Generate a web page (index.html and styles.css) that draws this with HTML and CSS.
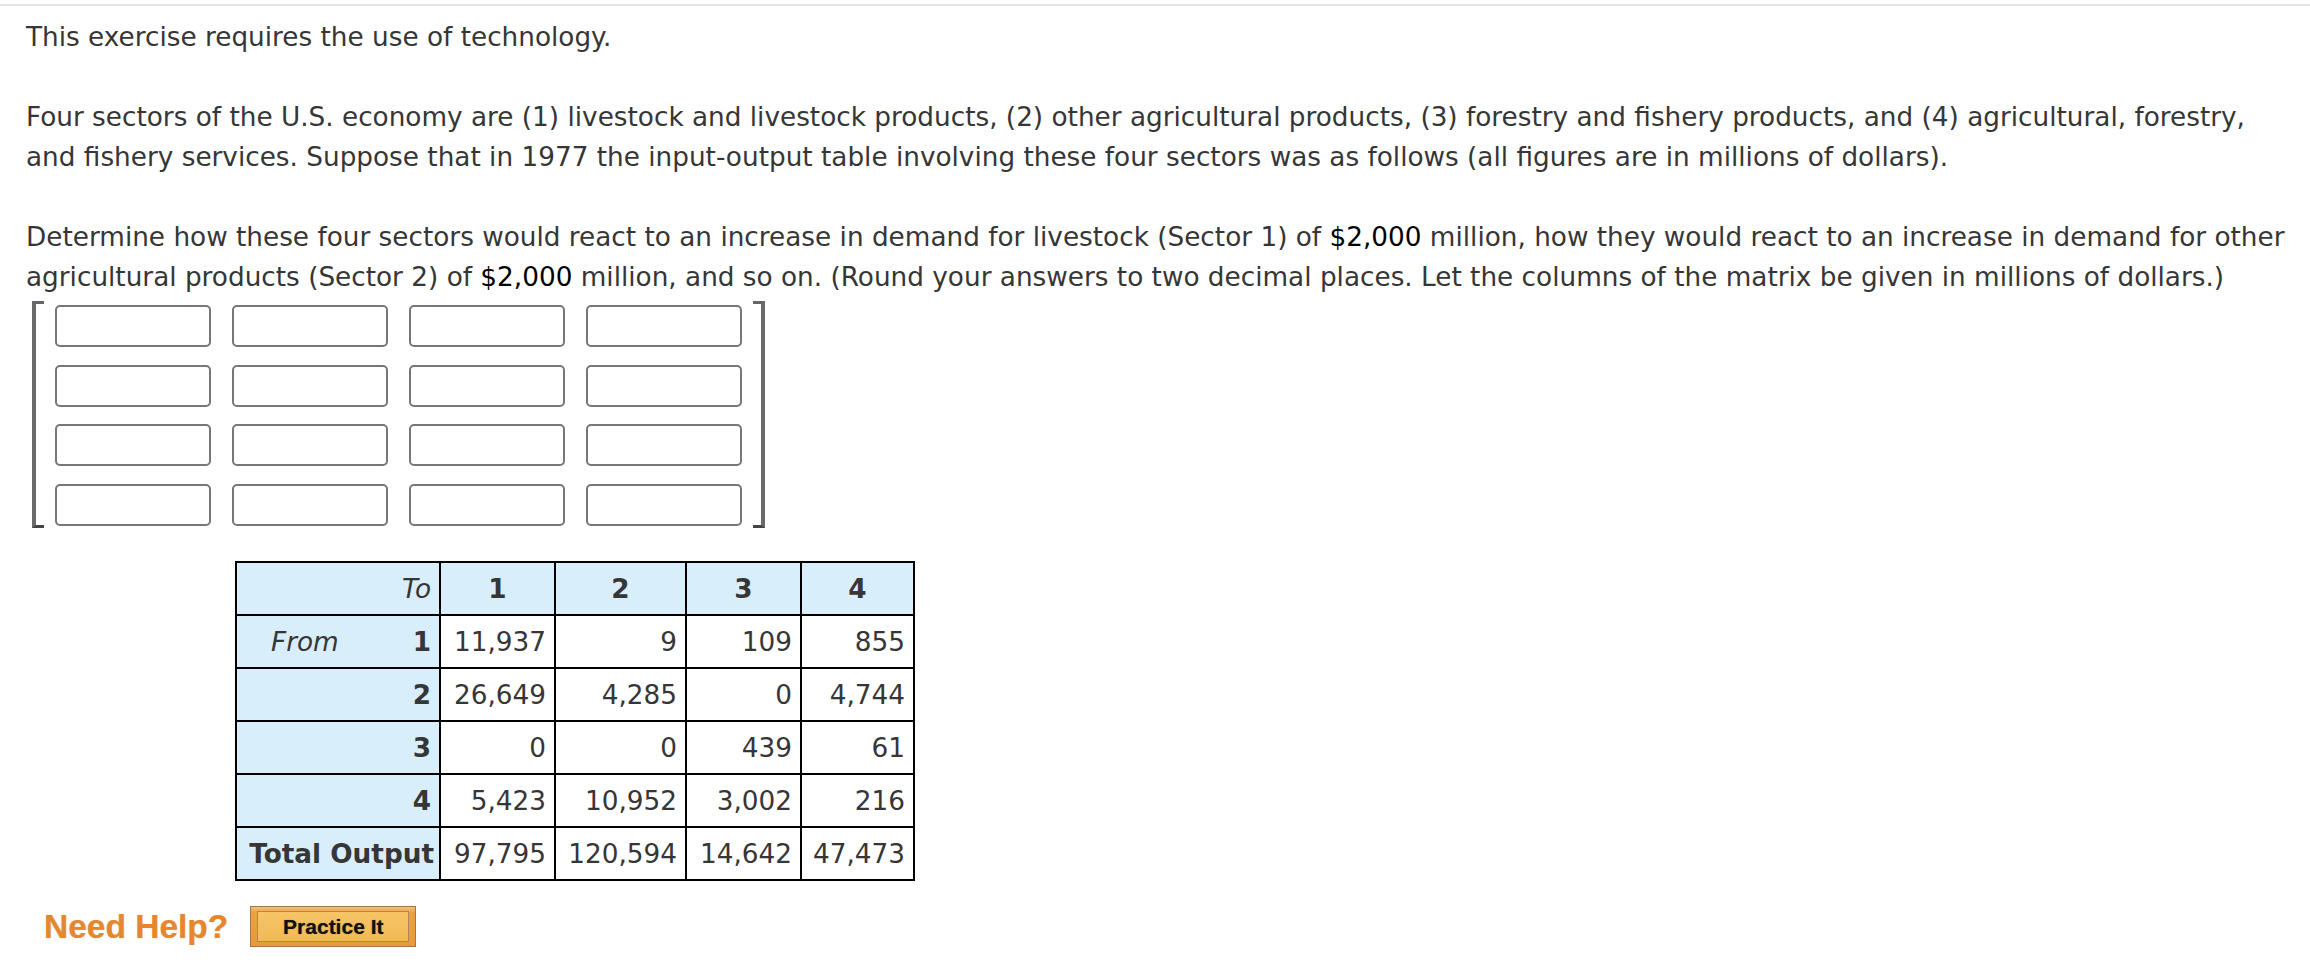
FILE: index.html
```html
<!DOCTYPE html>
<html>
<head>
<meta charset="utf-8">
<link rel="stylesheet" href="styles.css">
</head>
<body>
<div class="page">
  <div class="content">
    <p class="para">This exercise requires the use of technology.</p>
    <p class="para">Four sectors of the U.S. economy are (1) livestock and livestock products, (2) other agricultural products, (3) forestry and fishery products, and (4) agricultural, forestry, and fishery services. Suppose that in 1977 the input-output table involving these four sectors was as follows (all figures are in millions of dollars).</p>
    <p class="para last">Determine how these four sectors would react to an increase in demand for livestock (Sector 1) of <span class="money">$2,000</span> million, how they would react to an increase in demand for other agricultural products (Sector 2) of <span class="money">$2,000</span> million, and so on. (Round your answers to two decimal places. Let the columns of the matrix be given in millions of dollars.)</p>

    <div class="matrix">
      <div class="bracket left"></div>
      <div class="cells">
        <input class="box" type="text"><input class="box" type="text"><input class="box" type="text"><input class="box" type="text">
        <input class="box" type="text"><input class="box" type="text"><input class="box" type="text"><input class="box" type="text">
        <input class="box" type="text"><input class="box" type="text"><input class="box" type="text"><input class="box" type="text">
        <input class="box" type="text"><input class="box" type="text"><input class="box" type="text"><input class="box" type="text">
      </div>
      <div class="bracket right"></div>
    </div>

    <table class="io">
      <colgroup>
        <col class="c0"><col class="c1"><col class="c2"><col class="c3"><col class="c4">
      </colgroup>
      <tr class="head">
        <td class="lab to"><i>To</i></td>
        <td class="hnum">1</td><td class="hnum">2</td><td class="hnum">3</td><td class="hnum">4</td>
      </tr>
      <tr>
        <td class="lab"><span class="rowlab"><i class="from">From</i><b>1</b></span></td>
        <td class="num">11,937</td><td class="num">9</td><td class="num">109</td><td class="num">855</td>
      </tr>
      <tr>
        <td class="lab"><span class="rowlab"><i class="from"></i><b>2</b></span></td>
        <td class="num">26,649</td><td class="num">4,285</td><td class="num">0</td><td class="num">4,744</td>
      </tr>
      <tr>
        <td class="lab"><span class="rowlab"><i class="from"></i><b>3</b></span></td>
        <td class="num">0</td><td class="num">0</td><td class="num">439</td><td class="num">61</td>
      </tr>
      <tr>
        <td class="lab"><span class="rowlab"><i class="from"></i><b>4</b></span></td>
        <td class="num">5,423</td><td class="num">10,952</td><td class="num">3,002</td><td class="num">216</td>
      </tr>
      <tr>
        <td class="lab total"><b>Total Output</b></td>
        <td class="num">97,795</td><td class="num">120,594</td><td class="num">14,642</td><td class="num">47,473</td>
      </tr>
    </table>

    <div class="help">
      <span class="need">Need Help?</span>
      <button class="practice" type="button"><span class="practice-inner">Practice It</span></button>
    </div>
  </div>
</div>
</body>
</html>
```

FILE: styles.css
```css
html, body {
  margin: 0;
  padding: 0;
  background: #ffffff;
}

.page {
  margin-top: 4px;
  border-top: 2px solid #e3e3e3;
}

.content {
  padding: 11px 20px 0 26px;
  font-family: "DejaVu Sans", Verdana, sans-serif;
  font-size: 26.3px;
  line-height: 40px;
  color: #363636;
}

.para {
  margin: 0 0 40px 0;
}

.para.last {
  margin-bottom: 4px;
}

.money {
  color: #000000;
}

/* matrix */
.matrix {
  display: flex;
  align-items: stretch;
  margin-left: 6px;
  width: max-content;
}

.bracket {
  width: 8px;
  height: 221px;
  border-top: 3px solid #666;
  border-bottom: 3px solid #444;
}

.bracket.left {
  border-left: 4px solid #6a6a6a;
  margin-right: 11px;
}

.bracket.right {
  border-right: 4px solid #6a6a6a;
  margin-left: 11px;
}

.cells {
  display: grid;
  grid-template-columns: repeat(4, 156px);
  grid-auto-rows: 42px;
  column-gap: 21px;
  row-gap: 17.5px;
  padding-top: 4px;
}

.box {
  box-sizing: border-box;
  width: 156px;
  height: 42px;
  margin: 0;
  border: 2px solid #777777;
  border-radius: 5px;
  background: #ffffff;
  font: inherit;
}

/* table */
.io {
  margin-top: 33px;
  margin-left: 209px;
  border-collapse: collapse;
  table-layout: fixed;
  width: 678px;
}

.c0 { width: 204px; }
.c1 { width: 115px; }
.c2 { width: 131px; }
.c3 { width: 115px; }
.c4 { width: 113px; }

.io td {
  border: 2px solid #000000;
  height: 51px;
  padding: 0 8px 0 8px;
  white-space: nowrap;
  color: #363636;
}

.io .head td,
.io td.lab {
  background: #d9eefb;
}

.io td.to {
  text-align: right;
}

.io td.hnum {
  text-align: center;
  font-weight: bold;
}

.io td.num {
  text-align: right;
}

.rowlab {
  display: flex;
  justify-content: space-between;
  align-items: baseline;
  padding-left: 26px;
}

.io td.total {
  padding: 0 5px 0 5px;
  text-align: right;
}

/* help */
.help {
  display: flex;
  align-items: center;
  margin-top: 25px;
  margin-left: 18px;
  gap: 22px;
}

.need {
  font-family: "Liberation Sans", Arial, sans-serif;
  font-weight: bold;
  font-size: 33.5px;
  line-height: 40px;
  color: #e4882f;
  text-shadow: 0 0 1px rgba(228, 136, 47, 0.6);
}

.practice {
  box-sizing: border-box;
  width: 166px;
  height: 41px;
  padding: 4px 6px;
  margin: 0;
  border: 1px solid #a2763e;
  background: linear-gradient(#f2c27a 0, #eba048 14%, #e89a3c 100%);
  display: flex;
  cursor: pointer;
}

.practice-inner {
  flex: 1;
  display: flex;
  align-items: center;
  justify-content: center;
  border: 1px solid #b38550;
  background: linear-gradient(#f6c566, #f2ba55);
  font-family: "Liberation Sans", Arial, sans-serif;
  font-weight: bold;
  font-size: 21px;
  color: #111111;
  text-shadow: 0 0 1px rgba(0, 0, 0, 0.5);
}
```
